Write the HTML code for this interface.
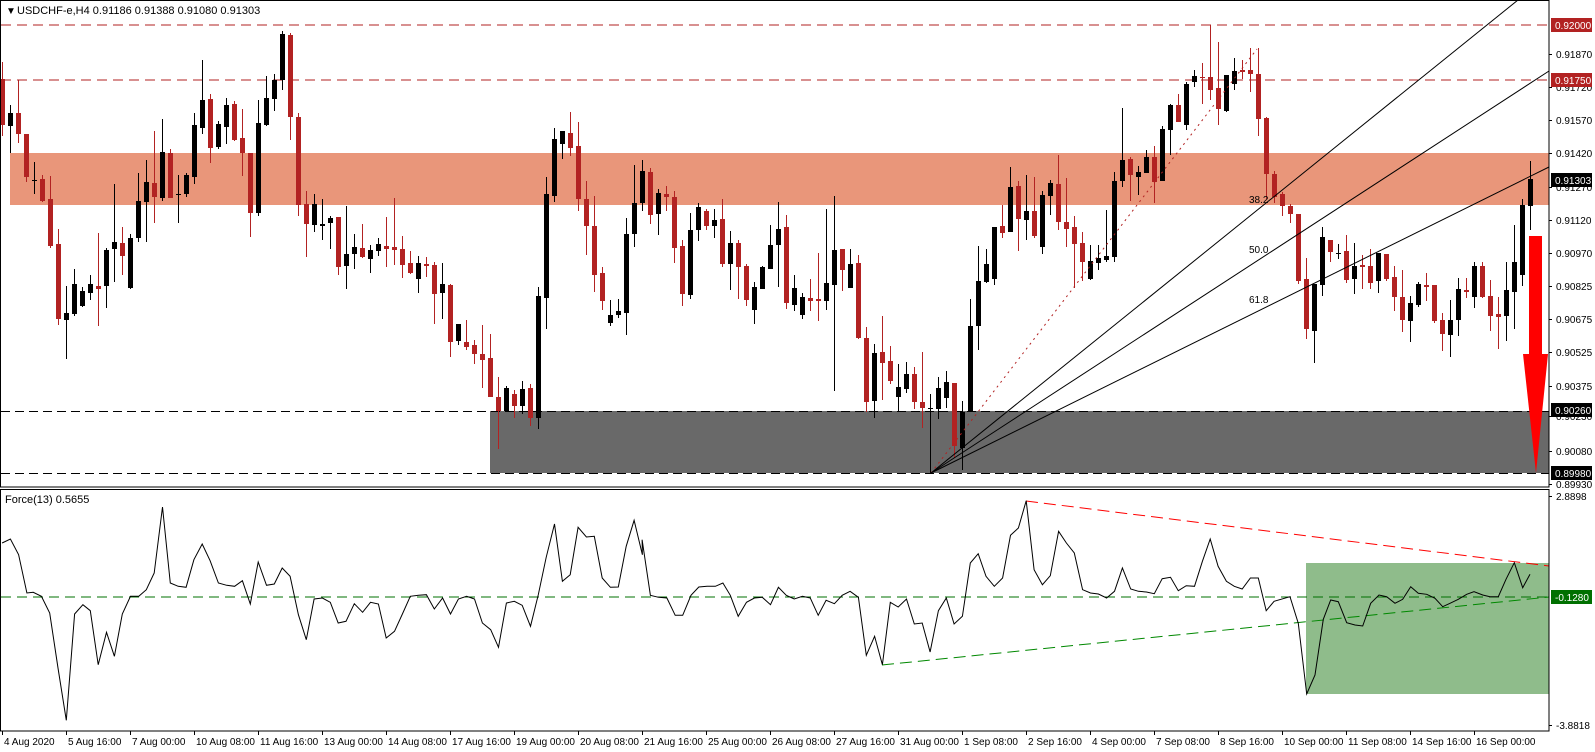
<!DOCTYPE html>
<html><head><meta charset="utf-8">
<style>
html,body{margin:0;padding:0;background:#fff;width:1595px;height:752px;overflow:hidden}
svg{display:block;font-family:"Liberation Sans",sans-serif;font-size:11px}
.sm{font-size:10px}
</style></head><body>
<svg id="s" width="1595" height="752" xmlns="http://www.w3.org/2000/svg" shape-rendering="crispEdges">
<rect x="0" y="0" width="1595" height="752" fill="#fff"/>
<rect x="10" y="153" width="1539" height="52" fill="#E9967A"/>
<rect x="490" y="411" width="1059" height="62" fill="#696969"/>
<line x1="1" y1="25" x2="1549" y2="25" stroke="#B22222" stroke-dasharray="10,6"/>
<line x1="1" y1="80" x2="1549" y2="80" stroke="#B22222" stroke-dasharray="10,6"/>
<line x1="1" y1="411.5" x2="1549" y2="411.5" stroke="#000" stroke-dasharray="9,5"/>
<line x1="1" y1="473.5" x2="1549" y2="473.5" stroke="#000" stroke-dasharray="9,5"/>
<g id="candles"></g>
<g shape-rendering="auto">
<line x1="931" y1="473" x2="1257" y2="49" stroke="#B22222" stroke-dasharray="2,4" stroke-width="1"/>
<line x1="931" y1="473" x2="1518" y2="0" stroke="#000" stroke-width="1"/>
<line x1="931" y1="473" x2="1549" y2="71" stroke="#000" stroke-width="1"/>
<line x1="931" y1="473" x2="1549" y2="167" stroke="#000" stroke-width="1"/>
</g>
<text class="sm" x="1249" y="203" fill="#000">38.2</text>
<text class="sm" x="1249" y="253" fill="#000">50.0</text>
<text class="sm" x="1249" y="303" fill="#000">61.8</text>
<rect x="1529" y="236" width="13" height="118" fill="#f00"/>
<polygon points="1523,354 1548,354 1536,473" fill="#f00" shape-rendering="auto"/>
<rect x="1306" y="563" width="243" height="131" fill="#8FBC8B"/>
<line x1="1" y1="597" x2="1549" y2="597" stroke="#007000" stroke-dasharray="10,6"/>
<line x1="1026" y1="501" x2="1549" y2="566" stroke="#f00" stroke-dasharray="12,6" shape-rendering="auto"/>
<line x1="882" y1="665" x2="1549" y2="597" stroke="#080" stroke-dasharray="12,6" shape-rendering="auto"/>
<polyline id="force" fill="none" stroke="#000" stroke-width="1" shape-rendering="auto"/>
<rect x="0.5" y="0.5" width="1548.5" height="486.5" fill="none" stroke="#000"/>
<rect x="0.5" y="489.5" width="1548.5" height="241.5" fill="none" stroke="#000"/>
<rect x="0" y="488" width="1549" height="1" fill="#fff"/>
<g id="axis"></g>
<text x="6" y="14" fill="#000" class="sm">&#9660;</text>
<text x="17" y="14" fill="#000">USDCHF-e,H4  0.91186 0.91388 0.91080 0.91303</text>
<text x="5" y="503" fill="#000">Force(13) 0.5655</text>
</svg>
<script>
var NS="http://www.w3.org/2000/svg";
function el(t,a,p,txt){var e=document.createElementNS(NS,t);for(var k in a)e.setAttribute(k,a[k]);if(txt!=null)e.textContent=txt;(p||document.getElementById('s')).appendChild(e);return e;}
var D="r 79 125 62 136|b 113 126 105 153|r 113 134 80 143|r 134 177 134 182|b 180 181 162 194|r 179 201 175 202|r 199 246 176 248|r 244 319 229 325|b 313 320 286 359|b 284 314 269 316|b 291 306 287 307|b 284 293 275 300|r 286 289 233 326|b 250 286 248 308|b 242 249 184 282|r 243 256 227 275|b 238 288 234 289|b 201 238 173 242|b 182 202 160 242|r 183 197 131 223|b 152 198 119 201|r 153 198 149 198|b 194 195 175 223|b 175 194 173 197|b 125 177 113 184|b 100 128 60 134|r 99 148 94 163|b 124 147 121 149|b 105 127 98 144|r 104 140 101 141|r 138 153 109 176|r 153 213 153 237|b 123 213 100 216|b 98 125 76 126|b 80 99 74 111|b 34 80 31 90|r 35 117 33 140|r 117 205 113 216|r 204 224 191 257|b 204 225 194 232|b 224 226 199 240|b 218 223 216 249|r 217 267 217 275|b 254 266 206 289|b 247 254 234 269|r 248 257 224 258|b 250 259 245 273|b 244 251 238 256|r 246 249 217 267|r 247 250 198 265|"+
"r 249 265 236 278|r 263 273 251 274|b 263 279 256 293|r 264 266 257 277|r 265 294 262 324|b 284 293 263 319|r 285 342 284 357|b 324 341 324 345|r 342 347 320 350|r 345 354 340 364|r 354 360 325 388|r 358 397 334 397|r 397 411 377 449|b 388 411 386 411|r 394 406 390 418|b 389 406 381 414|r 388 418 384 426|b 296 418 287 429|b 194 298 177 329|b 139 196 128 202|b 131 144 131 159|r 133 148 112 156|r 146 199 122 211|r 199 226 181 255|r 226 275 196 292|r 273 301 267 310|b 315 323 300 326|b 311 315 299 318|b 234 313 218 335|b 203 234 165 247|b 171 203 160 211|r 172 215 168 224|b 193 214 189 235|r 194 197 186 211|r 197 248 191 263|r 246 294 240 306|b 230 295 213 299|b 207 230 203 241|r 211 226 209 230|b 220 226 209 238|r 219 264 199 267|b 243 264 231 290|r 243 267 240 299|r 266 300 264 306|b 287 310 282 324|b 267 289 266 289|b 245 269 225 269|b 229 245 202 287|r 227 303 215 309|b 288 305 275 311|"+
"b 297 315 293 319|r 298 301 279 311|r 299 301 253 321|b 283 301 209 310|b 250 285 196 391|r 249 270 249 291|b 264 288 249 288|r 263 338 255 339|r 338 402 327 412|b 353 401 344 418|r 352 363 316 400|r 361 381 346 384|b 387 397 364 412|b 374 389 362 393|r 374 402 367 409|r 402 408 352 428|b 408 409 394 473|b 388 409 377 419|b 382 398 371 408|r 383 446 383 458|b 412 448 401 470|b 326 412 299 412|b 281 326 246 350|b 264 282 249 283|b 227 279 227 285|r 226 233 205 238|b 187 232 167 232|r 186 219 181 251|b 211 220 175 240|r 211 236 177 238|b 195 247 191 254|b 183 196 180 215|r 184 222 155 230|r 222 229 178 247|r 227 244 216 288|r 243 262 232 281|b 261 279 245 280|b 258 263 245 270|b 256 260 210 262|b 181 257 172 262|b 160 181 108 187|r 159 175 157 201|b 172 177 166 195|b 157 173 150 173|r 157 182 146 203|b 129 181 126 181|b 105 130 104 155|r 105 122 94 122|b 84 125 82 130|b 76 82 70 87|"+
"r 77 78 63 104|r 77 90 25 100|r 88 109 42 125|b 75 111 75 112|b 71 84 58 90|r 70 72 60 79|r 70 74 48 92|r 74 119 48 136|r 118 174 117 199|r 174 197 171 203|r 194 206 192 216|r 206 214 204 223|r 214 281 214 284|r 279 329 258 339|b 284 331 284 363|b 237 285 227 296|r 240 252 240 262|b 253 254 244 259|r 251 280 235 283|b 266 279 243 294|r 265 267 255 289|r 266 283 249 289|b 253 281 253 293|r 254 279 254 281|r 277 297 266 311|r 297 320 270 332|b 303 321 296 342|b 284 305 282 307|r 285 287 273 301|r 285 321 285 323|r 320 334 313 351|b 320 335 300 357|b 289 320 278 336|r 290 292 278 298|b 266 297 262 308|r 266 297 262 298|r 296 316 280 331|r 314 317 297 349|b 290 316 262 341|b 262 292 225 329|b 205 275 199 286|b 179 206 161 230";
var g=document.getElementById('candles');
D.split('|').forEach(function(s,i){var p=s.split(' ');var c=p[0]=='r'?'#B22222':'#000';var bt=+p[1],bb=+p[2],h=+p[3],l=+p[4];var x=2+8*i;
el('rect',{x:x,y:h,width:1,height:Math.max(1,l-h),fill:c},g);
el('rect',{x:x-2,y:bt,width:5,height:Math.max(1,bb-bt),fill:c},g);});
var A=[[5,165],[25,153],[45,200],[65,315],[80,313],[100,325],[120,375],[140,540],[160,697],[180,378],[200,350],[218,368],[237,530],[257,433],[276,505],[295,378],[315,325],[335,325],[353,305],[372,255],[392,57],[411,285],[430,295],[449,298],[468,215],[488,168],[507,218],[527,285],[547,292],[566,295],[585,278],[604,348],[623,222],[643,292],[662,288],[681,240],[700,265],[720,380],[739,455],[758,333],[778,330],[797,343],[816,405],[835,400],[855,347],[875,373],[894,343],[913,348],[932,450],[952,430],[971,378],[990,325],[1010,322],[1029,320],[1048,363],[1068,330],[1087,378],[1106,333],[1126,325],[1145,333],[1164,405],[1184,425],[1203,478],[1222,345],[1241,340],[1260,352],[1280,415],[1299,320],[1318,208],[1338,108],[1357,280],[1376,260],[1395,118],[1415,147],[1434,145],[1453,270],[1473,298],[1492,297],[1511,175],[1530,97],[1550,200]];
var B=[[5,155],[25,322],[45,328],[65,330],[85,382],[103,382],[123,322],[142,297],[162,295],[182,295],[200,285],[218,322],[237,385],[257,343],[276,330],[295,328],[315,350],[334,298],[353,322],[372,333],[392,325],[411,330],[430,382],[449,337],[469,347],[488,322],[507,310],[527,328],[546,502],[566,445],[585,530],[604,343],[623,357],[643,333],[662,408],[681,405],[700,492],[720,368],[739,330],[758,408],[778,385],[797,225],[816,197],[835,265],[855,295],[875,270],[894,142],[913,120],[932,38],[951,245],[971,290],[990,263],[1010,130],[1029,165],[1048,195],[1068,305],[1087,315],[1106,318],[1126,330],[1145,310],[1164,240],[1184,303],[1203,310],[1222,312],[1241,317],[1260,272],[1280,268],[1299,308],[1318,293],[1338,295],[1357,220],[1376,153],[1395,235],[1415,280],[1434,295],[1453,303],[1473,270],[1492,270],[1511,368],[1530,340]];
var C=[[270,410],[295,490],[320,702],[345,645],[370,478],[392,420],[415,425],[440,488],[465,495],[488,498],[512,430],[537,405],[560,410],[585,430],[608,418],[632,380],[655,400],[680,403],[705,415],[728,440],[750,430],[775,418],[800,403],[822,395],[848,405],[870,410],[895,410],[918,358],[943,308],[968,383],[990,343]];
var pts=[];
A.forEach(function(p){pts.push((p[0]/2.413).toFixed(1)+','+(488+p[1]/3).toFixed(1));});
B.forEach(function(p){pts.push((640+p[0]/2.413).toFixed(1)+','+(488+p[1]/3).toFixed(1));});
C.forEach(function(p){pts.push((1200+p[0]/3).toFixed(1)+','+(460+p[1]/3).toFixed(1));});
document.getElementById('force').setAttribute('points',pts.join(' '));
var ax=document.getElementById('axis');
var L=[["0.91870",54],["0.91720",87],["0.91570",120],["0.91420",153],["0.91270",187],["0.91120",220],["0.90970",253],["0.90825",286],["0.90675",319],["0.90525",352],["0.90375",386],["0.90230",416],["0.90080",451],["0.89930",484],["2.8898",496],["-3.8818",725]];
L.forEach(function(l){el('rect',{x:1549,y:l[1],width:3,height:1,fill:'#000'},ax);el('text',{x:1556,y:l[1]+4,fill:'#000','class':'sm'},ax,l[0]);});
var Bx=[["0.92000",25,'#B22222','#fff'],["0.91750",80,'#B22222','#fff'],["0.91303",180,'#000','#fff'],["0.90260",410,'#000','#fff'],["0.89980",473,'#000','#fff'],["-0.1280",597,'#007000','#fff']];
Bx.forEach(function(b){el('rect',{x:1551,y:b[1]-7,width:41,height:14,fill:b[2]},ax);el('text',{x:1555,y:b[1]+4,fill:b[3],'class':'sm'},ax,b[0]);});
var dates=["4 Aug 2020","5 Aug 16:00","7 Aug 00:00","10 Aug 08:00","11 Aug 16:00","13 Aug 00:00","14 Aug 08:00","17 Aug 16:00","19 Aug 00:00","20 Aug 08:00","21 Aug 16:00","25 Aug 00:00","26 Aug 08:00","27 Aug 16:00","31 Aug 00:00","1 Sep 08:00","2 Sep 16:00","4 Sep 00:00","7 Sep 08:00","8 Sep 16:00","10 Sep 00:00","11 Sep 08:00","14 Sep 16:00","16 Sep 00:00"];
dates.forEach(function(d,i){var x=2+64*i;el('rect',{x:x,y:731,width:1,height:4,fill:'#000'},ax);el('text',{x:x+2,y:745,fill:'#000','class':'sm'},ax,d);});
</script>
</body></html>
